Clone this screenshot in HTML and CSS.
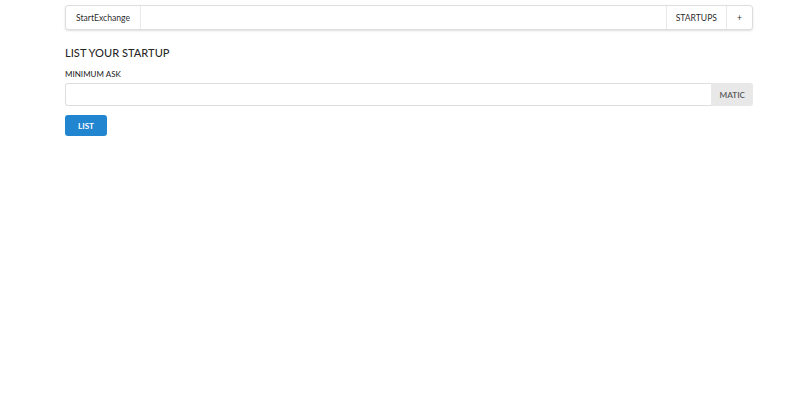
FILE: index.html
```html
<!DOCTYPE html>
<html>
<head>
<meta charset="utf-8">
<link rel="stylesheet" href="styles.css">
</head>
<body>
<div class="container">
  <div class="menu">
    <div class="item">StartExchange</div>
    <div class="right">
      <div class="item narrow">STARTUPS</div>
      <div class="item">+</div>
    </div>
  </div>
  <h3 class="title">LIST YOUR STARTUP</h3>
  <form class="form">
    <label class="label">MINIMUM ASK</label>
    <div class="input">
      <input type="text">
      <div class="addon">MATIC</div>
    </div>
    <button type="button" class="btn">LIST</button>
  </form>
</div>
</body>
</html>
```
FILE: styles.css
```css
html, body {
  margin: 0;
  padding: 0;
  background: #fff;
  font-family: Lato, "Helvetica Neue", Arial, sans-serif;
  color: rgba(0,0,0,0.87);
}
.container {
  width: 688px;
  margin: 0 0 0 65px;
  padding-top: 5px;
}
.menu {
  display: flex;
  height: 25px;
  box-sizing: border-box;
  border: 1px solid rgba(34,36,38,0.15);
  border-radius: 3px;
  box-shadow: 0 1px 2px 0 rgba(34,36,38,0.15);
  font-size: 8.6px;
}
.item {
  display: flex;
  align-items: center;
  padding: 0 10px;
  border-right: 1px solid rgba(34,36,38,0.1);
}
.right {
  margin-left: auto;
  display: flex;
}
.right .item {
  border-right: none;
  border-left: 1px solid rgba(34,36,38,0.1);
}
.right .narrow {
  padding: 0 9px 0 9px;
}
.title {
  margin: 16px 0 0;
  font-size: 11.1px;
  font-weight: 500;
  line-height: 14px;
}
.form {
  margin-top: 9px;
}
.label {
  display: block;
  font-size: 8px;
  line-height: 10px;
  font-weight: 500;
}
.input {
  display: flex;
  margin-top: 4px;
  height: 23px;
}
.input input {
  flex: 1;
  box-sizing: border-box;
  border: 1px solid rgba(34,36,38,0.15);
  border-right: none;
  border-radius: 3px 0 0 3px;
  outline: none;
  margin: 0;
}
.addon {
  display: flex;
  align-items: center;
  padding: 0 8px;
  background: #e8e8e8;
  color: rgba(0,0,0,0.6);
  font-size: 8.2px;
  font-weight: 700;
  border-radius: 0 3px 3px 0;
}
.btn {
  display: block;
  margin-top: 9px;
  width: 42px;
  height: 21px;
  border: none;
  border-radius: 3px;
  background: #2185d0;
  color: #fff;
  font-family: Lato, sans-serif;
  font-weight: 700;
  font-size: 8.2px;
  padding: 0;
}
```
